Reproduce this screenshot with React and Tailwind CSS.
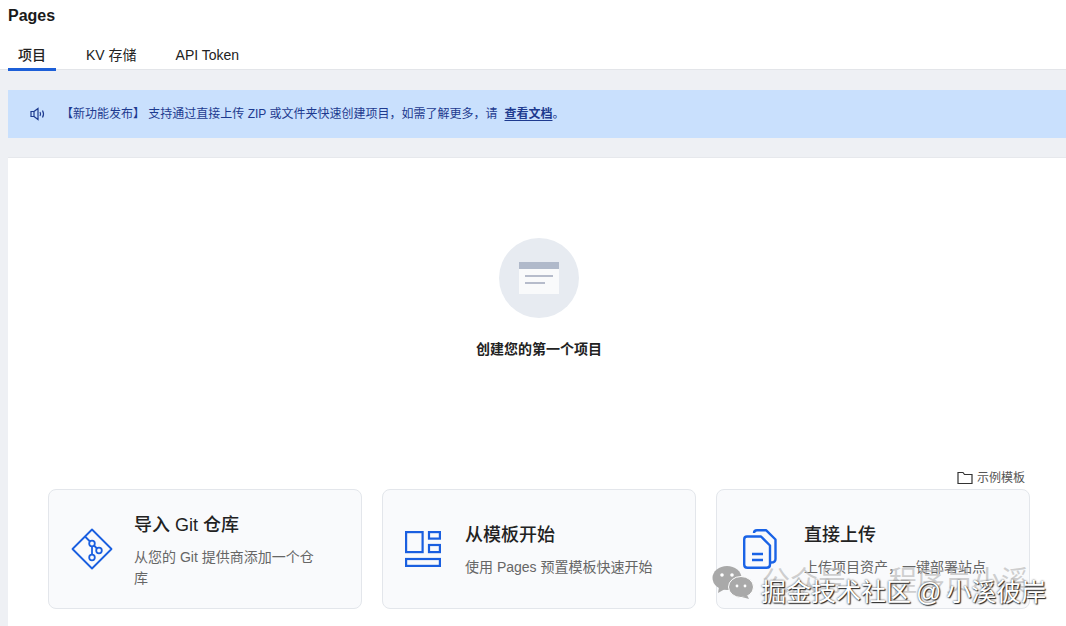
function GitIcon() {
  return (
    <svg width="42" height="42" viewBox="0 0 42 42" fill="none" stroke="#1a5fe0" strokeWidth="1.8">
      <path d="M21 1.5 L40.5 21 L21 40.5 L1.5 21 Z" strokeLinejoin="round" />
      <path d="M14 8.5 L19 13.5" />
      <circle cx="21" cy="15.5" r="2.8" />
      <path d="M21 18.5 V26.5" />
      <circle cx="21" cy="29.5" r="2.8" />
      <path d="M23 17.5 L26 20.5" />
      <circle cx="28" cy="22.5" r="2.8" />
    </svg>
  );
}

function TemplateIcon() {
  return (
    <svg width="36" height="36" viewBox="0 0 36 36" fill="none" stroke="#1a5fe0" strokeWidth="2.2">
      <rect x="1.1" y="1.1" width="16.5" height="20" />
      <rect x="24" y="1.1" width="10.9" height="6.5" />
      <rect x="24" y="14" width="10.9" height="7.1" />
      <rect x="1.1" y="28" width="33.8" height="6.9" />
    </svg>
  );
}

function UploadIcon() {
  return (
    <svg width="34" height="40" viewBox="0 0 34 40" fill="none" stroke="#1a63e6" strokeWidth="2.4" strokeLinejoin="round">
      <path d="M11 4 Q11 1.2 14 1.2 H23 L32.5 10.5 V30 Q32.5 33.5 28 33.5" />
      <path d="M4 7.5 H18 L27 16.5 V35.5 Q27 38.8 23.5 38.8 H4.5 Q1.2 38.8 1.2 35.5 V10.5 Q1.2 7.5 4 7.5 Z" />
      <path d="M9 25 H20 M9 31 H20" />
    </svg>
  );
}

function ActionCard({ icon, title, desc, iconBox, gap }) {
  return (
    <div className="flex h-[120px] w-[314px] items-center rounded-lg border border-[#e3e6eb] bg-[#f9fafc] pl-[22px] pr-[40px]">
      <div className={`flex shrink-0 items-center justify-center ${iconBox}`}>{icon}</div>
      <div className={gap}>
        <div className="text-lg leading-6 font-medium text-[#222]">{title}</div>
        <div className="mt-[10px] text-sm leading-[21px] text-[#666]">{desc}</div>
      </div>
    </div>
  );
}

export default function App() {
  return (
    <div
      className="relative h-[626px] w-[1066px] overflow-hidden bg-[#eef0f4] text-[#1f1f1f]"
      style={{ fontFamily: '"Liberation Sans", "Noto Sans CJK SC", sans-serif' }}
    >
      {/* Header + tabs */}
      <div className="h-[70px] border-b border-[#e3e5e9] bg-white pl-2">
        <div className="pt-[6px] text-base leading-[20px] font-bold text-[#1a1a1a]">Pages</div>
        <div className="mt-[19px] flex text-sm text-[#222]">
          <div className="h-[26px] w-12 border-b-[3px] border-[#1c5fd8] text-center leading-5 font-medium">项目</div>
          <div className="ml-[30px] leading-5">KV 存储</div>
          <div className="ml-[39px] leading-5">API Token</div>
        </div>
      </div>

      {/* Notice */}
      <div className="mt-5 ml-2 flex h-12 items-center bg-[#c9e0fd] pl-[22px] text-xs text-[#1d3a8f]">
        <svg width="16" height="14" viewBox="0 0 16 14" fill="none" stroke="#1d3a8f" strokeWidth="1.2">
          <path d="M1 4.5 H4 V9.5 H1 Z M4 4.5 L8 1.5 V12.5 L4 9.5" />
          <path d="M10 5 Q11.2 7 10 9 M12.5 3.5 Q14.5 7 12.5 10.5" />
        </svg>
        <span className="ml-[15px]">【新功能发布】 支持通过直接上传 ZIP 或文件夹快速创建项目，如需了解更多，请</span>
        <span className="ml-[7px] font-bold underline underline-offset-2">查看文档</span>
        <span>。</span>
      </div>

      {/* Main panel */}
      <div className="mt-[19px] ml-2 h-[470px] border-t border-[#e6e8ec] bg-white pl-10">
        <div className="flex w-[982px] flex-col items-center pt-[80px]">
          <div className="flex h-20 w-20 items-center justify-center rounded-full bg-[#e7ebf1]">
            <div className="h-8 w-10 bg-[#f9fafb]">
              <div className="h-[7px] bg-[#b0b9ca]" />
              <div className="mt-[6px] ml-[6px] h-[2px] w-7 bg-[#b6bccb]" />
              <div className="mt-[5px] ml-[6px] h-[2px] w-5 bg-[#b6bccb]" />
            </div>
          </div>
          <div className="mt-[21px] text-sm leading-5 font-bold text-[#222]">创建您的第一个项目</div>
        </div>

        <div className="mt-[111px] flex w-[977px] items-center justify-end text-xs text-[#555]">
          <svg width="16" height="14" viewBox="0 0 16 14" fill="none" stroke="#333" strokeWidth="1.2">
            <path d="M1 1.5 H6 L7.5 3.5 H15 V12.5 H1 Z" />
          </svg>
          <span className="ml-1">示例模板</span>
        </div>

        <div className="mt-[3px] flex gap-5">
          <ActionCard icon={<GitIcon />} iconBox="w-[42px]" gap="ml-[21px] pb-[2px] pt-[6px]" title="导入 Git 仓库" desc="从您的 Git 提供商添加一个仓库" />
          <ActionCard icon={<TemplateIcon />} iconBox="w-[36px]" gap="ml-[24px] pt-[2px]" title="从模板开始" desc="使用 Pages 预置模板快速开始" />
          <ActionCard icon={<UploadIcon />} iconBox="w-[34px] ml-[4px]" gap="ml-[27px] pt-[2px]" title="直接上传" desc="上传项目资产，一键部署站点" />
        </div>
      </div>

      {/* Watermark */}
      <div className="absolute top-[565px] left-[712px] flex">
        <svg width="42" height="34" viewBox="0 0 42 34" fill="#a9a9a9">
          <ellipse cx="15" cy="13" rx="14.5" ry="12" />
          <path d="M7 22 L6 28 L13 24 Z" />
          <ellipse cx="29" cy="22" rx="12.5" ry="10.5" stroke="#fff" strokeWidth="1" />
          <path d="M35 30 L37 34 L30 32 Z" />
          <circle cx="10" cy="10" r="1.8" fill="#fff" />
          <circle cx="20" cy="10" r="1.8" fill="#fff" />
          <circle cx="25" cy="21" r="1.4" fill="#fff" />
          <circle cx="33" cy="21" r="1.4" fill="#fff" />
        </svg>
      </div>
      <div className="absolute top-[566px] left-[762px] text-[28px] leading-8 whitespace-nowrap text-[#bbb]/70 [word-spacing:9px]">公众号 · 程序员小溪</div>
      <div
        className="absolute top-[578px] left-[761px] text-[25px] leading-7 whitespace-nowrap text-white [word-spacing:-2px]"
        style={{ textShadow: '0 0 2px #333, 1px 1px 1px #222' }}
      >
        掘金技术社区 @ 小溪彼岸
      </div>
    </div>
  );
}
